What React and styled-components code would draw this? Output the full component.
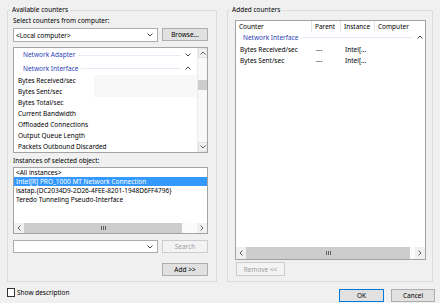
import React from "react";
import styled, { createGlobalStyle } from "styled-components";

const counters = [
  "Bytes Received/sec",
  "Bytes Sent/sec",
  "Bytes Total/sec",
  "Current Bandwidth",
  "Offloaded Connections",
  "Output Queue Length",
  "Packets Outbound Discarded",
];

const instances = [
  "<All instances>",
  "Intel[R] PRO_1000 MT Network Connection",
  "isatap.{DC2034D9-2D26-4FEE-8201-1948D6FF4796}",
  "Teredo Tunneling Pseudo-Interface",
];

const added = [
  { counter: "Bytes Received/sec", parent: "---", instance: "Intel[..." },
  { counter: "Bytes Sent/sec", parent: "---", instance: "Intel[..." },
];

const Chevron = ({ up, color = "#444" }) => (
  <svg width="6" height="4" viewBox="0 0 6 4">
    <polyline
      points={up ? "0.5,3.5 3,1 5.5,3.5" : "0.5,0.5 3,3 5.5,0.5"}
      fill="none"
      stroke={color}
      strokeWidth="1"
    />
  </svg>
);

const SideChevron = ({ right }) => (
  <svg width="4" height="6" viewBox="0 0 4 6">
    <polyline
      points={right ? "0.5,0.5 3,3 0.5,5.5" : "3.5,0.5 1,3 3.5,5.5"}
      fill="none"
      stroke="#606060"
      strokeWidth="1"
    />
  </svg>
);

const Grip = () => (
  <svg width="5" height="4" viewBox="0 0 5 4">
    <path d="M0.5 0v4M2.5 0v4M4.5 0v4" stroke="#606060" strokeWidth="1" />
  </svg>
);

const App = () => {
  return (
    <>
      <GlobalStyle />
      <DIALOG>
        <PANELS>
          <GROUP $w={210}>
            <LEGEND>Available counters</LEGEND>
            <GROUP_BODY $pl={5} $pr={8}>
              <LABEL>Select counters from computer:</LABEL>
              <FIELD_ROW $mt={3} $h={14}>
                <COMBO>
                  <span>&lt;Local computer&gt;</span>
                  <Chevron />
                </COMBO>
                <BUTTON $w={46}>Browse...</BUTTON>
              </FIELD_ROW>
              <LIST $mt={5} $h={106}>
                <ROWS>
                  <GROUP_HEADER $h={13}>
                    <span>Network Adapter</span>
                    <HEADER_LINE />
                    <Chevron />
                  </GROUP_HEADER>
                  <GROUP_HEADER $h={14}>
                    <span>Network Interface</span>
                    <HEADER_LINE />
                    <Chevron up />
                  </GROUP_HEADER>
                  {counters.map((c, i) => (
                    <COUNTER_ROW key={c} $shade={i < 2}>
                      {c}
                    </COUNTER_ROW>
                  ))}
                </ROWS>
                <VSCROLL>
                  <ARROW_BOX $h={10}>
                    <Chevron up color="#606060" />
                  </ARROW_BOX>
                  <VTRACK>
                    <VTHUMB />
                  </VTRACK>
                  <ARROW_BOX $h={10}>
                    <Chevron color="#606060" />
                  </ARROW_BOX>
                </VSCROLL>
              </LIST>
              <LABEL $mt={4}>Instances of selected object:</LABEL>
              <LIST $mt={2} $h={67} $column>
                <ROWS>
                  {instances.map((it, i) => (
                    <INSTANCE_ROW key={it} $selected={i === 1}>
                      {it}
                    </INSTANCE_ROW>
                  ))}
                </ROWS>
                <HSCROLL $h={10}>
                  <HARROW $w={10}>
                    <SideChevron />
                  </HARROW>
                  <HTHUMB $w={158}>
                    <Grip />
                  </HTHUMB>
                  <HTRACK />
                  <HARROW $w={10}>
                    <SideChevron right />
                  </HARROW>
                </HSCROLL>
              </LIST>
              <FIELD_ROW $mt={6} $h={13}>
                <COMBO>
                  <span />
                  <Chevron />
                </COMBO>
                <BUTTON $w={46} $disabled>
                  Search
                </BUTTON>
              </FIELD_ROW>
              <ADD_ROW>
                <BUTTON $w={46}>Add &gt;&gt;</BUTTON>
              </ADD_ROW>
            </GROUP_BODY>
          </GROUP>
          <GROUP $w={206}>
            <LEGEND>Added counters</LEGEND>
            <GROUP_BODY $pl={7} $pr={6} $pt={5}>
              <LIST $h={240} $column>
                <ROWS>
                  <TABLE_HEAD>
                    <COL $w={76}>Counter</COL>
                    <COL $w={29}>Parent</COL>
                    <COL $w={34}>Instance</COL>
                    <COL $last>Computer</COL>
                  </TABLE_HEAD>
                  <GROUP_HEADER $h={10} $inset={7} $right={2}>
                    <span>Network Interface</span>
                    <HEADER_LINE />
                    <Chevron up />
                  </GROUP_HEADER>
                  <SPACER />
                  {added.map((r) => (
                    <TABLE_ROW key={r.counter}>
                      <CELL $w={76}>{r.counter}</CELL>
                      <CELL $w={29}>{r.parent}</CELL>
                      <CELL $w={34}>{r.instance}</CELL>
                      <CELL />
                    </TABLE_ROW>
                  ))}
                </ROWS>
                <HSCROLL $h={12}>
                  <HARROW $w={10}>
                    <SideChevron />
                  </HARROW>
                  <HTHUMB $w={164}>
                    <Grip />
                  </HTHUMB>
                  <HTRACK />
                  <HARROW $w={10}>
                    <SideChevron right />
                  </HARROW>
                </HSCROLL>
              </LIST>
              <BUTTON $w={49} $h={14} $mt={2} $ml={1} $disabled>
                Remove &lt;&lt;
              </BUTTON>
            </GROUP_BODY>
          </GROUP>
        </PANELS>
        <FOOTER>
          <CHECK_LABEL>
            <CHECKBOX />
            Show description
          </CHECK_LABEL>
          <ACTIONS>
            <BUTTON $w={45} $default>
              OK
            </BUTTON>
            <BUTTON $w={44}>Cancel</BUTTON>
          </ACTIONS>
        </FOOTER>
      </DIALOG>
    </>
  );
};

export default App;

const GlobalStyle = createGlobalStyle`
  html, body {
    margin: 0;
    padding: 0;
    background: #f0f0f0;
  }
  body {
    font-family: "Noto Sans", "Open Sans", sans-serif;
    font-size: 6.5px;
    color: #000;
  }
  * {
    box-sizing: border-box;
  }
`;
const DIALOG = styled.div`
  width: 440px;
  height: 303px;
  padding: 5px 5px 0 7px;
  overflow: hidden;
  display: flex;
  flex-direction: column;
`;
const PANELS = styled.div`
  display: flex;
  gap: 10px;
  margin-right: 2px;
`;
const GROUP = styled.fieldset`
  margin: 0;
  padding: 0;
  width: ${(p) => p.$w}px;
  height: 277px;
  min-inline-size: 0;
  border: 1px solid #dcdcdc;
`;
const LEGEND = styled.legend`
  margin-left: 2px;
  padding: 0 2px;
  line-height: 10px;
`;
const GROUP_BODY = styled.div`
  display: flex;
  flex-direction: column;
  padding: ${(p) => p.$pt || 2}px ${(p) => p.$pr}px 0 ${(p) => p.$pl}px;
`;
const LABEL = styled.div`
  line-height: 8px;
  margin-top: ${(p) => p.$mt || 0}px;
  white-space: nowrap;
`;
const FIELD_ROW = styled.div`
  display: flex;
  gap: 4px;
  height: ${(p) => p.$h}px;
  margin-top: ${(p) => p.$mt}px;
`;
const COMBO = styled.div`
  flex: 1;
  display: flex;
  align-items: center;
  justify-content: space-between;
  padding: 0 4px 0 2px;
  background: #fff;
  border: 1px solid #abadb3;
  white-space: nowrap;
`;
const BUTTON = styled.div`
  width: ${(p) => p.$w}px;
  height: ${(p) => p.$h || 13}px;
  margin-top: ${(p) => p.$mt || 0}px;
  margin-left: ${(p) => p.$ml || 0}px;
  display: flex;
  align-items: center;
  justify-content: center;
  white-space: nowrap;
  background: ${(p) => (p.$disabled ? "#f3f3f3" : "#e1e1e1")};
  border: 1px solid
    ${(p) => (p.$default ? "#0078d7" : p.$disabled ? "#cccccc" : "#adadad")};
  color: ${(p) => (p.$disabled ? "#a0a0a0" : "#000")};
`;
const ADD_ROW = styled.div`
  display: flex;
  justify-content: flex-end;
  margin-top: 10px;
`;
const LIST = styled.div`
  display: flex;
  flex-direction: ${(p) => (p.$column ? "column" : "row")};
  height: ${(p) => p.$h}px;
  margin-top: ${(p) => p.$mt || 0}px;
  background: #fff;
  border: 1px solid #a3a3a3;
  overflow: hidden;
`;
const ROWS = styled.div`
  flex: 1;
  min-width: 0;
  overflow: hidden;
`;
const GROUP_HEADER = styled.div`
  display: flex;
  align-items: center;
  height: ${(p) => p.$h}px;
  padding: 0 ${(p) => (p.$right ?? 6)}px 0 ${(p) => p.$inset || 9}px;
  color: #2b3fb5;
  white-space: nowrap;
`;
const HEADER_LINE = styled.div`
  flex: 1;
  height: 1px;
  margin: 1px 4px 0 3px;
  background: #e4ebf7;
`;
const COUNTER_ROW = styled.div`
  height: 11px;
  line-height: 11px;
  padding-left: 4px;
  white-space: nowrap;
  background: ${(p) =>
    p.$shade
      ? "linear-gradient(to right, #fff 0, #fff 80px, #f8f8f8 80px, #f8f8f8 100%)"
      : "transparent"};
`;
const VSCROLL = styled.div`
  width: 10px;
  display: flex;
  flex-direction: column;
  background: #f8f8f8;
  border-left: 1px solid #ececec;
`;
const ARROW_BOX = styled.div`
  height: ${(p) => p.$h}px;
  display: flex;
  align-items: center;
  justify-content: center;
  background: #f0f0f0;
  border: 1px solid #e2e2e2;
`;
const VTRACK = styled.div`
  flex: 1;
  padding-top: 22px;
`;
const VTHUMB = styled.div`
  height: 10px;
  background: #cdcdcd;
`;
const INSTANCE_ROW = styled.div`
  height: 9px;
  line-height: 9px;
  padding-left: 2px;
  white-space: nowrap;
  background: ${(p) => (p.$selected ? "#3399ff" : "transparent")};
  color: ${(p) => (p.$selected ? "#fff" : "#000")};
`;
const HSCROLL = styled.div`
  height: ${(p) => p.$h}px;
  flex: none;
  display: flex;
  background: #f0f0f0;
`;
const HARROW = styled.div`
  width: ${(p) => p.$w}px;
  display: flex;
  align-items: center;
  justify-content: center;
`;
const HTHUMB = styled.div`
  width: ${(p) => p.$w}px;
  display: flex;
  align-items: center;
  justify-content: center;
  background: #cdcdcd;
`;
const HTRACK = styled.div`
  flex: 1;
  background: #fbfbfb;
`;
const TABLE_HEAD = styled.div`
  display: flex;
  height: 11px;
  line-height: 11px;
`;
const COL = styled.div`
  width: ${(p) => (p.$w ? `${p.$w}px` : "auto")};
  flex: ${(p) => (p.$last ? 1 : "none")};
  padding-left: 3px;
  border-right: ${(p) => (p.$last ? "none" : "1px solid #e5e5e5")};
  white-space: nowrap;
`;
const SPACER = styled.div`
  height: 2px;
`;
const TABLE_ROW = styled.div`
  display: flex;
  height: 11px;
  line-height: 11px;
`;
const CELL = styled.div`
  width: ${(p) => (p.$w ? `${p.$w}px` : "auto")};
  flex: ${(p) => (p.$w ? "none" : 1)};
  padding-left: 4px;
  white-space: nowrap;
`;
const FOOTER = styled.div`
  display: flex;
  justify-content: space-between;
  align-items: flex-start;
  margin-top: 6px;
`;
const CHECK_LABEL = styled.div`
  display: flex;
  align-items: center;
  gap: 2px;
  height: 9px;
  white-space: nowrap;
`;
const CHECKBOX = styled.div`
  width: 8px;
  height: 9px;
  background: #fff;
  border: 1px solid #333;
`;
const ACTIONS = styled.div`
  display: flex;
  gap: 7px;
  margin-top: 1px;
`;
